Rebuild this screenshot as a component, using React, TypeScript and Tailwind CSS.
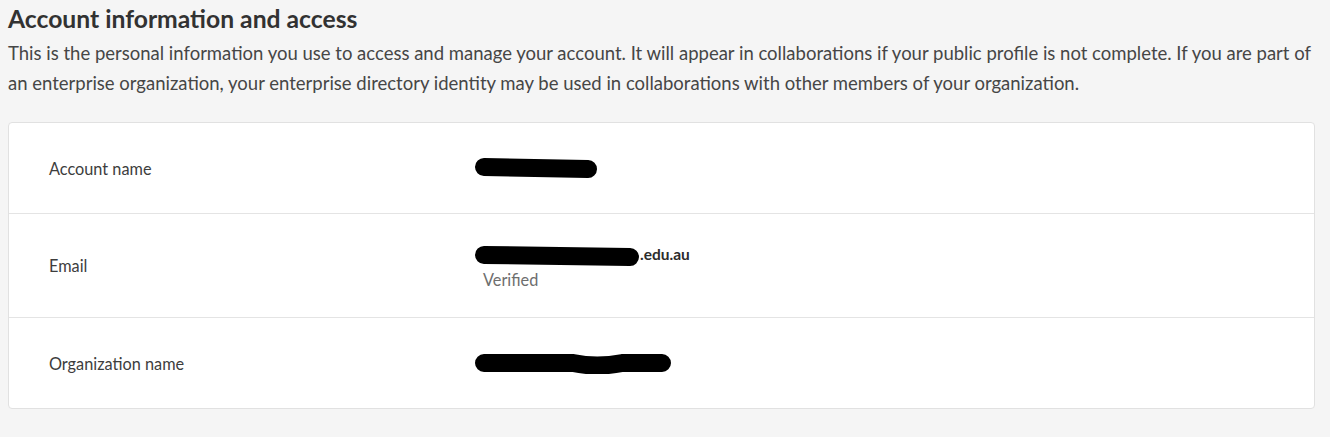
const font = { fontFamily: 'Lato, "Noto Sans", sans-serif' };

function Redaction({ width, wavy = false }: { width: number; wavy?: boolean }) {
  return (
    <svg width={width} height={22} viewBox={`0 0 ${width} 22`} className="block -ml-[9px]">
      {wavy ? (
        <path
          d={`M10 11 L${width * 0.5} 11 Q${width * 0.62} 16 ${width * 0.75} 11 L${width - 10} 11`}
          stroke="#000"
          strokeWidth={18}
          strokeLinecap="round"
          fill="none"
        />
      ) : (
        <path d={`M10 10 L${width - 10} 12`} stroke="#000" strokeWidth={18} strokeLinecap="round" fill="none" />
      )}
    </svg>
  );
}

function Label({ children }: { children: React.ReactNode }) {
  return <div className="w-[434px] pt-[2px] text-[16.3px] text-[#3d3d3d]">{children}</div>;
}

export default function App() {
  return (
    <div className="min-h-[437px] bg-[#f5f5f5] pl-2 pr-[15px] pt-[4px]" style={font}>
      <h1 className="text-[24.7px] font-bold leading-[30px] text-[#323232]">Account information and access</h1>
      <p className="mt-[4px] text-[18.5px] leading-[30px] text-[#464646]">
        This is the personal information you use to access and manage your account. It will appear in collaborations if
        your public profile is not complete. If you are part of an enterprise organization, your enterprise directory
        identity may be used in collaborations with other members of your organization.
      </p>
      <div className="mt-[24px] rounded-[4px] border border-[#e1e1e1] bg-white">
        <div className="h-[91px] flex items-center px-10 border-b border-[#e4e4e4]">
          <Label>Account name</Label>
          <Redaction width={124} />
        </div>
        <div className="h-[104px] flex items-center px-10 border-b border-[#e4e4e4]">
          <Label>Email</Label>
          <div className="flex flex-col pt-[2px]">
            <div className="relative text-[15.5px] font-bold text-[#2c2c2c] leading-[20px]">
              <span className="pl-[157px]">.edu.au</span>
              <div className="absolute left-0 top-[1px]">
                <Redaction width={166} />
              </div>
            </div>
            <div className="mt-[6px] text-[16.3px] text-[#6e6e6e] leading-[20px]">Verified</div>
          </div>
        </div>
        <div className="h-[90px] flex items-center px-10">
          <Label>Organization name</Label>
          <Redaction width={198} wavy />
        </div>
      </div>
    </div>
  );
}
